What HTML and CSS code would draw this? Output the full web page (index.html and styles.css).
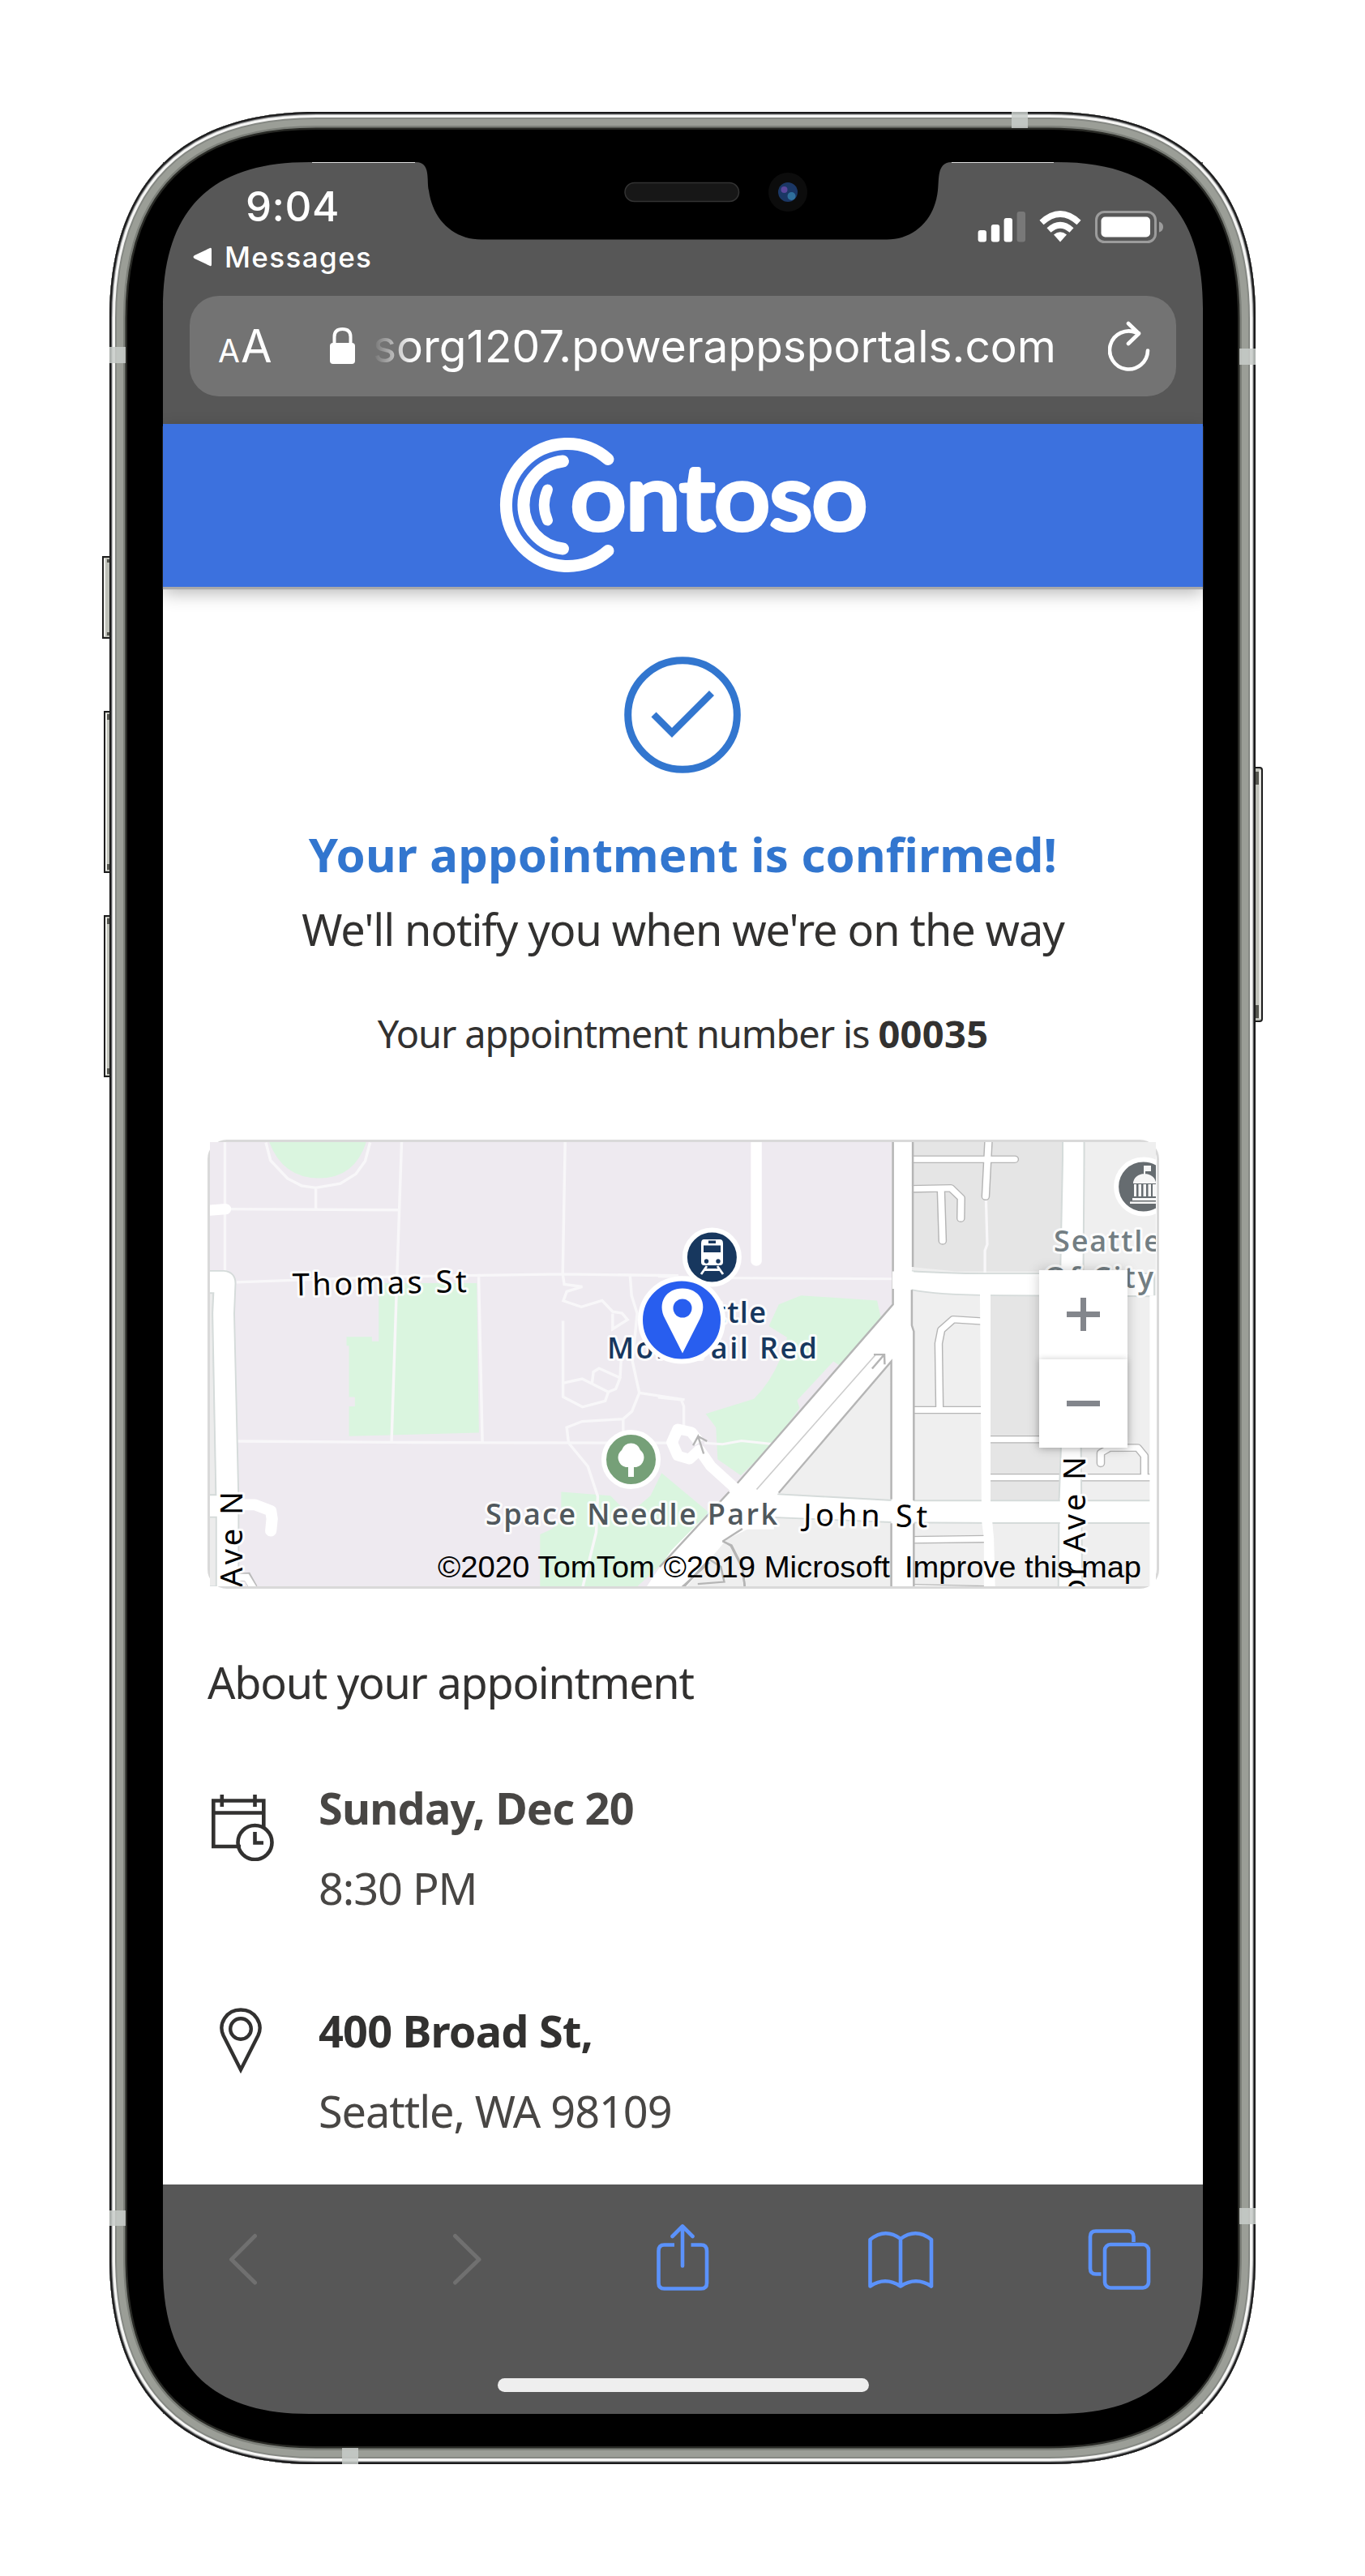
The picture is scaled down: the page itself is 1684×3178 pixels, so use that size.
FILE: index.html
```html
<!DOCTYPE html>
<html lang="en">
<head>
<meta charset="utf-8">
<title>Your appointment is confirmed</title>
<link rel="stylesheet" href="styles.css">
</head>
<body>
<div class="phone">
  <div class="screen">
    <div class="status">
      <div class="status-left">
        <div class="time">9:04</div>
        <div class="back-app">
          <svg width="24" height="24" viewBox="0 0 24 24"><path d="M2 10 21 1Q23 0 23 3V21Q23 24 21 23L2 14Q-1 12 2 10Z" fill="#fff"/></svg>
          <span>Messages</span>
        </div>
      </div>
      <svg class="status-icons" width="230" height="40" viewBox="1206 260 230 40">
        <g fill="#fff">
          <rect x="1206.6" y="284" width="10.4" height="14.500" rx="3"/>
          <rect x="1222.800" y="277" width="10.400" height="21.500" rx="3"/>
          <rect x="1238.600" y="269" width="10.400" height="29.500" rx="3"/>
          <rect x="1254.600" y="261" width="10.400" height="37.500" rx="3" opacity=".2"/>
          <path d="M1308 298.500 1300 289.500Q1308 283 1316 289.500Z"/>
        </g>
        <g fill="none" stroke="#fff" stroke-width="7.500">
          <path d="M1294 284Q1308 271.500 1322 284"/>
          <path d="M1285 274.500Q1308 253.500 1331 274.500"/>
        </g>
        <rect x="1352.500" y="261.500" width="73" height="37" rx="10" fill="none" stroke="#9c9c9c" stroke-width="3"/>
        <rect x="1358.500" y="267.500" width="60.500" height="25" rx="5" fill="#fff"/>
        <path d="M1430 273.500Q1435 275 1435 280T1430 286.500Z" fill="#9c9c9c"/>
      </svg>
    </div>
    <div class="address">
      <span class="aa"><small>A</small>A</span>
      <svg class="lock" width="31" height="45" viewBox="0 0 31 45"><path d="M5.500 21V11.500Q5.500 2 15.500 2T25.500 11.500V21" fill="none" stroke="#fff" stroke-width="4"/><rect y="19" width="31" height="26" rx="4" fill="#fff"/></svg>
      <span class="url">sorg1207.powerappsportals.com</span>
      <svg class="reload" width="52" height="62" viewBox="0 0 52 62" fill="none" stroke="#fff" stroke-width="4.600" stroke-linecap="round" stroke-linejoin="round"><path d="M49 36.500A23.500 23.500 0 1 1 35 14.500L38 15M25 3 38 15.500 25 28"/></svg>
    </div>
    <header class="site-header">
      <svg width="460" height="174" viewBox="613 536 460 174">
        <g fill="none" stroke="#fff" stroke-width="15" stroke-linecap="round">
          <path d="M750 566.500A75.500 75.500 0 1 0 750 679.500"/>
          <path d="M694.500 569A54.300 54.300 0 0 0 694.500 677"/>
          <path d="M675.500 604Q667 623 675.500 642" stroke-width="13"/>
        </g>
        <text class="logo-text" x="704" y="652.500" textLength="366" lengthAdjust="spacingAndGlyphs">ontoso</text>
      </svg>
    </header>
    <main class="content">
      <section class="confirm">
        <svg class="check" width="144" height="144" viewBox="770 810 144 144" fill="none" stroke="#3276cf"><circle cx="842" cy="882" r="67.300" stroke-width="9"/><path d="M806.500 881.500 829 904 878 855" stroke-width="8.500"/></svg>
        <h1>Your appointment is confirmed!</h1>
        <p class="notify">We'll notify you when we're on the way</p>
        <p class="number">Your appointment number is <b>00035</b></p>
      </section>
      <div class="map-frame">
      <svg class="map" width="1167" height="548" viewBox="259 1408 1167 548">
        <rect x="259" y="1408" width="1167" height="548" fill="#eeeaf0"/>
        <!-- west half: parks, footpaths, avenue -->
        <g transform="translate(240 1390) scale(.38265 .36996)" fill="none">
          <g fill="#daf5df">
            <path d="M238 40Q280 168 400 169T556 40Z"/>
            <path d="M594 519H910L917 1018 498 1029V930H517V899H498V728H490V698H572V713H594Z"/>
            <path d="M1182 1215 1341 1228 1400 1290 1470 1228 1506 1152 1700 1320 1640 1330 1428 1530H1114V1357L1150 1340 1182 1310Z"/>
          </g>
          <g stroke="#f8f7f9" stroke-width="9">
            <path d="M98 40V480M110 272 660 275M668 40 653 490 635 1052M230 50 245 110 300 170 345 194 391 201 470 187 520 155 550 112 566 50M391 201V275M135 516 650 497 1187 489 1560 494M916 489 928 1050M135 1046 640 1050 1560 1052M1195 40 1187 489 1192 523 1250 531 1200 547 1189 578 1247 598 1314 577 1348 614 1378 619 1396 641 1348 672V620M1404 490 1409 560 1427 620 1412 780 1434 885 1410 947 1382 972 1250 980 1200 1000 1206 1052 1268 1130 1300 1230 1295 1350 1252 1530M1188 645V898L1251 932 1324 912 1334 882 1250 838 1190 852M1334 882 1358 872 1372 835 1304 803 1286 815 1281 858M1372 835 1376 760M1434 885 1580 908M1382 972V1050"/>
          </g>
          <path d="M50 276 100 272" stroke="#fff" stroke-width="36" stroke-linecap="round"/>
          <path d="M40 552H60L58 620 69 1225H40ZM40 1299H70V1530H40Z" fill="#ececec" stroke="#d5dbda" stroke-width="4"/>
          <path d="M40 478H95Q132 482 132 520L128 620 142 1240V1540H70V1299H40V1225H69L58 620 61 552H40Z" fill="#fff" stroke="#d5dbda" stroke-width="5"/>
          <path d="M130 1258H195L246 1278 250 1305 246 1345" stroke="#fff" stroke-width="37" stroke-linecap="round" stroke-linejoin="round"/>
          <path d="M140 1500 170 1498 190 1535" stroke="#bbb" stroke-width="28"/><path d="M135 1500 168 1500 192 1540" stroke="#fff" stroke-width="22"/>
        </g>
        <!-- east half: city blocks and streets -->
        <g transform="translate(820 1390) scale(.40816 .36996)" fill="none">
          <path d="M345 590 412 560 642 577 655 640 530 795 510 780 400 910 408 935 325 1060 230 1160 160 1106 155 1000 124 955 270 905Q320 850 350 770L370 700 315 662Z" fill="#daf5df"/>
          <path d="M690 40H1500V1540H30L230 1310 685 780Z" fill="#efefef"/>
          <path d="M745 40H1210L1196 480H880L745 465ZM985 560H1200V1245H985Z" fill="#e5e5e5"/>
          <path d="M277 40V445" stroke="#fff" stroke-width="33" stroke-linecap="round"/>
          <path d="M-20 497 220 502 690 505M-20 900 50 908 58 930V1000M120 1052 175 1056 232 1045 330 1056M971 230 975 390 968 410V490" stroke="#f8f7f9" stroke-width="8"/>
          <g stroke="#b5b5b5" stroke-width="26" stroke-linejoin="round">
            <path d="M740 106H1058M979 40 970 230M740 205 865 202 896 235 895 303M835 205 840 378" stroke-linecap="round"/>
            <path d="M960 646 872 640 836 675 828 720 831 942M740 942H970M980 1040H1200M980 1167H1480M740 1375 970 1372M740 1535 970 1540M1318 1120V1085L1345 1068H1430L1450 1095V1160" stroke-linecap="round"/>
          </g>
          <g stroke="#fff" stroke-width="19" stroke-linejoin="round">
            <path d="M740 106H1058M979 40 970 230M740 205 865 202 896 235 895 303M835 205 840 378" stroke-linecap="round"/>
            <path d="M960 646 872 640 836 675 828 720 831 942M740 942H970M980 1040H1200M980 1167H1480M740 1375 970 1372M740 1535 970 1540M1318 1120V1085L1345 1068H1430L1450 1095V1160" stroke-linecap="round"/>
          </g>
          <path d="M1203 40V100L1196 480V560L1200 1000 1192 1245 1190 1540H1262L1258 1000 1265 560 1268 100V40Z" fill="#fff" stroke="#d5dbda" stroke-width="5"/>
          <path d="M692 475Q850 488 1000 487H1480V563L1000 560Q820 558 745 541H692ZM300 1220 500 1232 700 1244H1480V1319H1000L700 1317 500 1308 240 1296Z" fill="#fff" stroke="#d5dbda" stroke-width="5"/>
          <path d="M1198 470H1262V570H1198ZM1195 1235H1258V1328H1195ZM1466 560H1500V1540H1466Z" fill="#fff"/>
          <path d="M690 40V590L219 1187 20 1410-60 1540H60L236 1310 345 1218 685 780V1540H753V680L747 660V40Z" fill="#fff"/>
          <path d="M690 40V590L219 1187M195 1215-15 1465M345 1218 685 780V1240M685 1320V1540M750 40V465M747 541V660L753 680V1244M753 1320V1540M60 1530 135 1440 170 1465 180 1515 100 1522M242 1530 235 1470 200 1395 175 1378 195 1355 240 1338" stroke="#b5b5b5" stroke-width="6"/>
          <path d="M240 1245 345 1180 330 1340 250 1340 175 1380 150 1400 60 1520-20 1520 150 1310Z" fill="#fff"/>
          <path d="M953 555H985V1250L995 1370 999 1540H965V1370L958 1310Z" fill="#fff"/>
          <path d="M688 480H752V538H688ZM688 1247H753V1315H688Z" fill="#fff"/>
          <path d="M278 1207 640 755" stroke="#ccc" stroke-width="4"/><path d="M632 757 664 757 665 790M664 757 627 804" stroke="#b5b5b5" stroke-width="6"/>
          <path d="M105 1050 80 1015 40 1005 22 1050 40 1095 75 1106 105 1075 140 1130 220 1210" stroke="#fff" stroke-width="34" stroke-linejoin="round"/>
          <path d="M118 1088 101 1030 86 1060M101 1030 128 1046" stroke="#b5b5b5" stroke-width="6"/>
          <path d="M175 1380 235 1338M175 1380 202 1393 235 1465 242 1530M50 1535 135 1450" stroke="#b5b5b5" stroke-width="6"/>
        </g>
        <!-- place labels -->
        <g class="halo">
          <text class="street" x="361" y="1597.500" textLength="215" transform="rotate(-1.200 361 1598)">Thomas St</text>
          <text class="street" x="991" y="1881" textLength="153" transform="rotate(.8 991 1881)">John St</text>
          <text class="street" transform="translate(299 1957) rotate(-90)" textLength="118">Ave N</text>
          <text class="street" transform="translate(1339 1914) rotate(-90)" textLength="118">Ave N</text>
          <text class="street" transform="translate(1339 1943) rotate(-90)">r</text>
          <text class="street" transform="translate(1339 1970) rotate(-90)">o</text>
          <text class="poi navy" x="816" y="1631" textLength="129">Seattle</text>
          <text class="poi navy" x="749" y="1674.500" textLength="259">Monorail Red</text>
          <text class="poi park" x="599" y="1880" textLength="360">Space Needle Park</text>
          <text class="poi civic" x="1300" y="1543" textLength="132">Seattle</text>
          <text class="poi civic" x="1288" y="1588" textLength="135">Of City</text>
        </g>
        <g stroke="#fff" stroke-width="6">
          <circle cx="878.400" cy="1550" r="33.500" fill="#17375e"/>
          <circle cx="778.500" cy="1799.500" r="33.500" fill="#76a078"/>
          <circle cx="1410.600" cy="1463" r="33.500" fill="#666c70"/>
        </g>
        <path d="M868.500 1528H888Q892 1528 892 1533V1556Q892 1560 888 1560H868.500Q865 1560 865 1556V1533Q865 1528 868.500 1528Z" fill="#fff"/>
        <path d="M874 1529.500H883V1533H874ZM868 1535.500H889V1544H868Z" fill="#17375e"/><circle cx="871.500" cy="1555" r="2.700" fill="#17375e"/><circle cx="886" cy="1555" r="2.700" fill="#17375e"/>
        <path d="M872 1561 865 1571M885 1561 892 1571M869 1565.500H888" stroke="#fff" stroke-width="2.800"/>
        <path d="M775 1821V1809H772A12 12 0 0 1 767 1788A12 12 0 0 1 790 1788A12 12 0 0 1 785 1809H782V1821Z" fill="#fff"/>
        <g fill="#f6f6f6"><path d="M1411 1437H1420V1444H1413V1449H1411ZM1398 1459A14 12 0 0 1 1426 1459ZM1399 1460H1402V1475H1399ZM1404.500 1460H1408V1475H1404.500ZM1410.500 1460H1414V1475H1410.500ZM1416.500 1460H1420V1475H1416.500ZM1422 1460H1426V1475H1422ZM1397 1477H1428V1480H1397ZM1394 1481.500H1430V1484H1394Z"/></g>
        <circle cx="841" cy="1627.500" r="51" fill="#285eef" stroke="#fff" stroke-width="6"/>
        <path d="M842 1668.500 820.500 1626C810 1606 822 1588.500 842 1588.500S874 1606 863.500 1626Z" fill="#fff"/><circle cx="842" cy="1613" r="11.500" fill="#285eef"/>
        <text class="credit" x="540" y="1945" textLength="558" lengthAdjust="spacingAndGlyphs">©2020 TomTom ©2019 Microsoft</text>
        <text class="credit" x="1116" y="1945" textLength="292" lengthAdjust="spacingAndGlyphs">Improve this map</text>
      </svg>
      <div class="zoom-controls"><button class="zoom-btn plus" aria-label="Zoom in"></button><button class="zoom-btn" aria-label="Zoom out"></button></div>
      </div>
      <h2>About your appointment</h2>
      <div class="detail">
        <svg width="82" height="84" viewBox="259 2212 82 84" fill="none" stroke="#323130" stroke-width="4.600"><path d="M297 2278H263.300V2221.500H325.300V2255M263 2236.500H325M273.800 2214V2229M314.500 2214V2229"/><circle cx="314.500" cy="2273" r="21"/><path d="M314.500 2260V2273.500H325"/></svg>
        <div class="detail-text"><b class="soft">Sunday, Dec 20</b><span>8:30 PM</span></div>
      </div>
      <div class="detail place">
        <svg width="82" height="84" viewBox="259 2476 82 84" fill="none" stroke="#323130" stroke-width="4.400"><path d="M297 2553.500 275.500 2511C269 2497 279 2479.500 297 2479.500S325 2497 318.500 2511Z"/><circle cx="297" cy="2503" r="12.800"/></svg>
        <div class="detail-text"><b>400 Broad St,</b><span>Seattle, WA 98109</span></div>
      </div>
    </main>
    <nav class="toolbar">
      <svg width="1283" height="140" viewBox="201 2695 1283 140" fill="none" stroke="#5b92fb" stroke-width="4.600" stroke-linecap="round" stroke-linejoin="round">
        <g stroke="#707070" stroke-width="5"><path d="M314.500 2758.500 285.500 2787.500 314.500 2816M561.500 2758.500 591 2787.500 561.500 2816"/></g>
        <path d="M832 2769.500H819.500Q812.500 2769.500 812.500 2777V2816.500Q812.500 2823.500 819.500 2823.500H865Q872 2823.500 872 2816.500V2777Q872 2769.500 865 2769.500H852.500" stroke-linecap="butt"/>
        <path d="M842 2747V2795.500M829.500 2759 842 2746.500 854.500 2759"/>
        <path d="M1111 2762Q1092 2748 1073.500 2763V2820.500Q1092 2808 1111 2820.500Q1130 2808 1149 2820.500V2763Q1130 2748 1111 2762V2820.500"/>
        <path d="M1358.500 2805.500H1352Q1345 2805.500 1345 2798.500V2759.500Q1345 2752.500 1352 2752.500H1391.500Q1398.500 2752.500 1398.500 2759.500V2766" stroke-linecap="butt"/>
        <rect x="1363" y="2769" width="54" height="53.500" rx="7"/>
      </svg>
      <div class="home-bar"></div>
    </nav>
  </div>
  <!-- phone casing lies over the screen so its rounded opening masks the corners -->
  <svg class="casing" width="1434" height="2902" viewBox="125 138 1434 2902">
    <defs>
      <path id="body" d="M135 393C135 226 223 138 390 138H1294C1461 138 1549 226 1549 393V2785C1549 2952 1461 3040 1294 3040H390C223 3040 135 2952 135 2785Z"/>
      <clipPath id="rim"><use href="#body"/></clipPath>
    </defs>
    <g stroke="#1e1e1e" stroke-width="2" fill="#bfc1b9">
      <path d="M136 687H127V787H136ZM136 878H129V1076H136ZM136 1130H129V1328H136ZM1548 947H1554Q1557 947 1557 950V1257Q1557 1260 1554 1260H1548Z"/>
    </g>
    <g fill="none" stroke="#efefec" stroke-width="2"><path d="M129 689V785M131 880V1074M131 1132V1326M1554.500 950V1257"/></g>
    <path d="M132 690H136V694H132ZM132 780H136V784H132ZM132 881H136V888H132ZM132 1066H136V1073H132ZM132 1133H136V1140H132ZM132 1318H136V1325H132ZM1549 952H1553V968H1549ZM1549 1240H1553V1256H1549Z" fill="#55564f"/>
    <path fill-rule="evenodd" d="M135 393C135 226 223 138 390 138H1294C1461 138 1549 226 1549 393V2785C1549 2952 1461 3040 1294 3040H390C223 3040 135 2952 135 2785ZM201 380V2798C201 2919 260 2978 381 2978H1304C1425 2978 1484 2919 1484 2798V380C1484 259 1425 200 1304 200H1174C1155 200 1159 223 1157 235C1153 272 1127 295.500 1094 295.500H594C560 295.500 534 272 529 235C526 223 532 200 513 200H381C260 200 201 259 201 380Z"/>
    <g fill="none" clip-path="url(#rim)">
      <use href="#body" stroke="#282925" stroke-width="44"/>
      <use href="#body" stroke="#7d807a" stroke-width="39"/>
      <use href="#body" stroke="#9b9e97" stroke-width="34"/>
      <use href="#body" stroke="#858883" stroke-width="18"/>
      <use href="#body" stroke="#f6f6f5" stroke-width="14"/>
      <use href="#body" stroke="#b9bab8" stroke-width="8"/>
      <use href="#body" stroke="#55565a" stroke-width="6"/>
      <use href="#body" stroke="#1b1b1b" stroke-width="4"/>
      <path d="M1248 138H1268V158H1248ZM135 428H155V448H135ZM1529 430H1549V450H1529ZM135 2727H155V2746H135ZM1529 2724H1549V2744H1529ZM422 3020H442V3040H422Z" fill="#c8ccc9" fill-opacity=".85"/>
    </g>
    <path d="M385 200.500H512M1174 200.500H1300" stroke="#fff" stroke-opacity=".8"/>
    <rect x="771" y="225.500" width="140.500" height="23" rx="11.500" fill="#171717" stroke="#333" stroke-width="1.500"/>
    <circle cx="972" cy="237" r="24" fill="#0c0c0c"/><circle cx="972" cy="237" r="12" fill="#1b3765"/><circle cx="976.500" cy="242" r="5" fill="#2f6f9b"/><circle cx="967.500" cy="234" r="4" fill="#5a479b"/>
  </svg>
</div>
</body>
</html>
```
FILE: styles.css
```css
* { box-sizing: border-box; }
body { margin: 0; background: #fff; }
h1, h2, p { margin: 0; font-weight: 400; white-space: nowrap; }
svg { display: block; flex: none; }

.phone { position: relative; width: 1414px; height: 2902px; margin: 138px 0 0 135px; padding: 62px 65px 62px 66px; }
.casing { position: absolute; top: 0; left: -10px; pointer-events: none; }
.screen { display: flex; flex-direction: column; width: 1283px; height: 2778px; background: #575757; }

.status { display: flex; justify-content: space-between; height: 165px; padding: 0 48px 0 37px; font-family: Inter, sans-serif; color: #fff; }
.status-left { padding-top: 24px; }
.time { padding-left: 65px; font-size: 51px; line-height: 62px; font-weight: 500; letter-spacing: .5px; }
.back-app { display: flex; align-items: center; gap: 15px; margin-top: 10px; font-size: 35px; line-height: 42px; font-weight: 500; letter-spacing: 1.4px; }
.status-icons { margin-top: 60px; }

.address { display: flex; align-items: center; height: 124px; margin: 0 33px; padding: 0 31px 0 35px; border-radius: 36px; background: #737373; font-family: Inter, sans-serif; color: #fff; }
.aa { width: 138px; padding-top: 5px; font-size: 56px; line-height: 80px; }
.aa small { margin-right: 1px; font-size: 39px; }
.lock { margin-top: -1px; }
.url { width: 841px; margin: 0 66px 0 22px; font-size: 55px; line-height: 80px; white-space: nowrap; -webkit-mask-image: linear-gradient(90deg, transparent, #000 50px); mask-image: linear-gradient(90deg, transparent, #000 50px); }

.site-header { display: flex; justify-content: flex-start; height: 201px; margin-top: 34px; padding: 13px 0 0 412px; background: #3c71de; box-shadow: 0 3px 1px #aaa, 0 8px 20px rgba(0, 0, 0, .28); z-index: 1; flex: none; }
.logo-text { font: 400 111px Lato, sans-serif; fill: #fff; stroke: #fff; stroke-width: 6px; stroke-linejoin: round; }

.content { flex: 1; padding: 86px 55px 0; background: #fff; font-family: "Noto Sans", "Open Sans", sans-serif; color: #323130; }
.confirm { display: flex; flex-direction: column; align-items: center; }
.check { margin-right: 1px; }
h1 { margin-top: 58px; font-size: 58px; line-height: 84px; font-weight: 700; letter-spacing: .2px; color: #3276cf; }
.notify { margin-top: 12px; font-size: 54px; line-height: 76px; letter-spacing: -1.05px; }
.number { margin-top: 57px; font-size: 47px; line-height: 68px; letter-spacing: -1.15px; }
.number b { letter-spacing: .3px; }

.map-frame { position: relative; width: 1174px; height: 554px; margin-top: 97px; border: 3px solid #d9d9d9; border-radius: 24px; }
.map text { font-family: "Noto Sans", sans-serif; }
.halo text { stroke: #fff; stroke-opacity: .85; stroke-width: 6px; stroke-linejoin: round; paint-order: stroke; }
.street { font-size: 38px; }
.map .poi { font-family: "Open Sans", sans-serif; font-size: 36px; font-weight: 600; }
.navy { fill: #17375e; }
.park { fill: #50585d; }
.civic { fill: #737e83; }
.map .credit { font-family: "Liberation Sans", Arial, sans-serif; font-size: 36px; }
.zoom-controls { position: absolute; top: 158px; right: 36px; width: 109px; box-shadow: 0 0 14px rgba(0, 0, 0, .22); }
.zoom-btn { display: grid; place-items: center; width: 109px; height: 109.500px; padding: 0; border: 0; background: #fff; }
.zoom-btn + .zoom-btn { box-shadow: 0 0 8px rgba(0, 0, 0, .2); }
.zoom-btn::before, .plus::after { content: ""; grid-area: 1 / 1; width: 41px; height: 7px; background: #83868c; }
.plus::after { width: 7px; height: 41px; }

h2 { margin-top: 77px; font-size: 54px; line-height: 76px; letter-spacing: -1.25px; }
.detail { display: flex; align-items: flex-start; margin: 98px 0 0 3px; }
.detail svg { margin-top: 1px; }
.place { margin-top: 119px; }
.place svg { margin-top: -10px; }
.detail-text { display: flex; flex-direction: column; margin: -19px 0 0 52px; font-size: 54px; line-height: 76px; letter-spacing: -1.05px; white-space: nowrap; color: #484644; }
.detail-text b { letter-spacing: -.8px; color: #323130; }
.detail-text .soft { color: #484644; }
.detail-text span { margin-top: 23px; }

.toolbar { flex: none; height: 283px; background: #575757; }
.home-bar { width: 458px; height: 17px; margin: 99px auto 0; border-radius: 9px; background: #eee; }
```
